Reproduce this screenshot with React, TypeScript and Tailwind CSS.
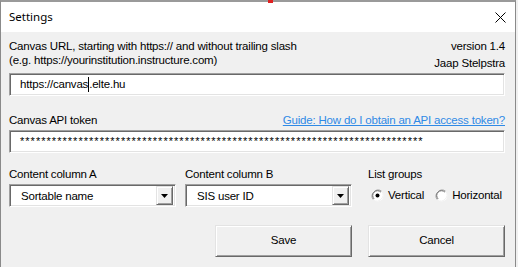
import React from 'react'

// Windows classic look: sunken fields, raised buttons
const SUNKEN =
  'border border-t-[#a0a0a0] border-l-[#a0a0a0] border-b-white border-r-white shadow-[inset_1px_1px_0_#696969,inset_-1px_-1px_0_#e3e3e3] bg-white'
const RAISED =
  'border border-t-[#e3e3e3] border-l-[#e3e3e3] border-b-[#696969] border-r-[#696969] shadow-[inset_1px_1px_0_#ffffff,inset_-1px_-1px_0_#a0a0a0] bg-[#f0f0f0]'

function Radio({ checked }: { checked?: boolean }) {
  return (
    <svg width="13" height="13" viewBox="0 0 13 13" className="shrink-0">
      <circle cx="6.5" cy="6.5" r="6" fill="#fff" />
      <path d="M10.7 2.3 A6 6 0 0 0 2.3 10.7" fill="none" stroke="#a0a0a0" strokeWidth="1" />
      <path d="M9.9 3.1 A4.8 4.8 0 0 0 3.1 9.9" fill="none" stroke="#696969" strokeWidth="1" />
      <path d="M2.3 10.7 A6 6 0 0 0 10.7 2.3" fill="none" stroke="#f0f0f0" strokeWidth="1" />
      {checked && <circle cx="6.5" cy="6.5" r="2" fill="#000" />}
    </svg>
  )
}

function Combo({ value, width }: { value: string; width: string }) {
  return (
    <div className={`${SUNKEN} ${width} h-[23px] flex items-center justify-between pl-[11px] pr-[2px]`}>
      <span>{value}</span>
      <div className={`${RAISED} w-[17px] h-[19px] flex items-center justify-center`}>
        <svg width="7" height="4" viewBox="0 0 7 4">
          <path d="M0 0 H7 L3.5 4 Z" fill="#000" />
        </svg>
      </div>
    </div>
  )
}

export default function App() {
  return (
    <div className="w-[518px] h-[267px] bg-[#f0f0f0] overflow-hidden text-[11.5px] tracking-[-0.2px] text-black font-['Liberation_Sans',Arial,sans-serif]">
      <div className="w-[516px] h-[267px] border-l border-r border-t-2 border-l-[#8a8a8a] border-r-[#8a8a8a] border-t-[#9a9a9a] flex flex-col relative">
        <div className="absolute left-[267px] -top-[2px] w-[5px] h-[3px] bg-[#e02020]" />

        {/* Title bar */}
        <div className="h-[30px] bg-white flex items-center justify-between pl-[8px] pr-[9px]">
          <span className="text-[11.5px] tracking-normal font-['Noto_Sans',sans-serif]">Settings</span>
          <svg width="11" height="11" viewBox="0 0 11 11">
            <path d="M0.5 0.5 L10.5 10.5 M10.5 0.5 L0.5 10.5" stroke="#000" strokeWidth="1" />
          </svg>
        </div>

        {/* Body */}
        <div className="flex-1 flex flex-col px-[8px] pt-[7px]">
          <div className="flex justify-between h-[28px]">
            <div className="leading-[14px]">
              <div>Canvas URL, starting with https:// and without trailing slash</div>
              <div>(e.g. https://yourinstitution.instructure.com)</div>
            </div>
            <div className="leading-[17px] text-right pr-[2px] -mt-[1px]">
              <div>version 1.4</div>
              <div>Jaap Stelpstra</div>
            </div>
          </div>

          <div className={`${SUNKEN} mt-[6px] mr-[2px] h-[23px] flex items-center pl-[10px]`}>
            <span>https://canvas</span>
            <span className="inline-block w-px h-[15px] bg-black" />
            <span>.elte.hu</span>
          </div>

          <div className="flex justify-between mt-[16px] leading-[16px] pr-[2px]">
            <span>Canvas API token</span>
            <span className="text-[#2f8ae6] underline">Guide: How do I obtain an API access token?</span>
          </div>

          <div className={`${SUNKEN} mt-[2px] mr-[2px] h-[23px] flex items-center pl-[10px] text-[11px] tracking-[1.03px]`}>
            {'*'.repeat(76)}
          </div>

          <div className="flex mt-[13px] leading-[16px]">
            <div className="flex flex-col gap-[2px]">
              <span>Content column A</span>
              <Combo value="Sortable name" width="w-[167px]" />
            </div>
            <div className="flex flex-col gap-[2px] ml-[9px]">
              <span>Content column B</span>
              <Combo value="SIS user ID" width="w-[167px]" />
            </div>
            <div className="flex flex-col ml-[16px]">
              <span>List groups</span>
              <div className="flex items-center mt-[5px] ml-[3px]">
                <Radio checked />
                <span className="ml-[4px]">Vertical</span>
                <span className="ml-[11px]"><Radio /></span>
                <span className="ml-[4px]">Horizontal</span>
              </div>
            </div>
          </div>

          <div className="flex justify-end gap-[16px] mt-[18px] pr-[2px]">
            <button className={`${RAISED} w-[137px] h-[32px]`}>Save</button>
            <button className={`${RAISED} w-[137px] h-[32px]`}>Cancel</button>
          </div>
        </div>
      </div>
    </div>
  )
}
